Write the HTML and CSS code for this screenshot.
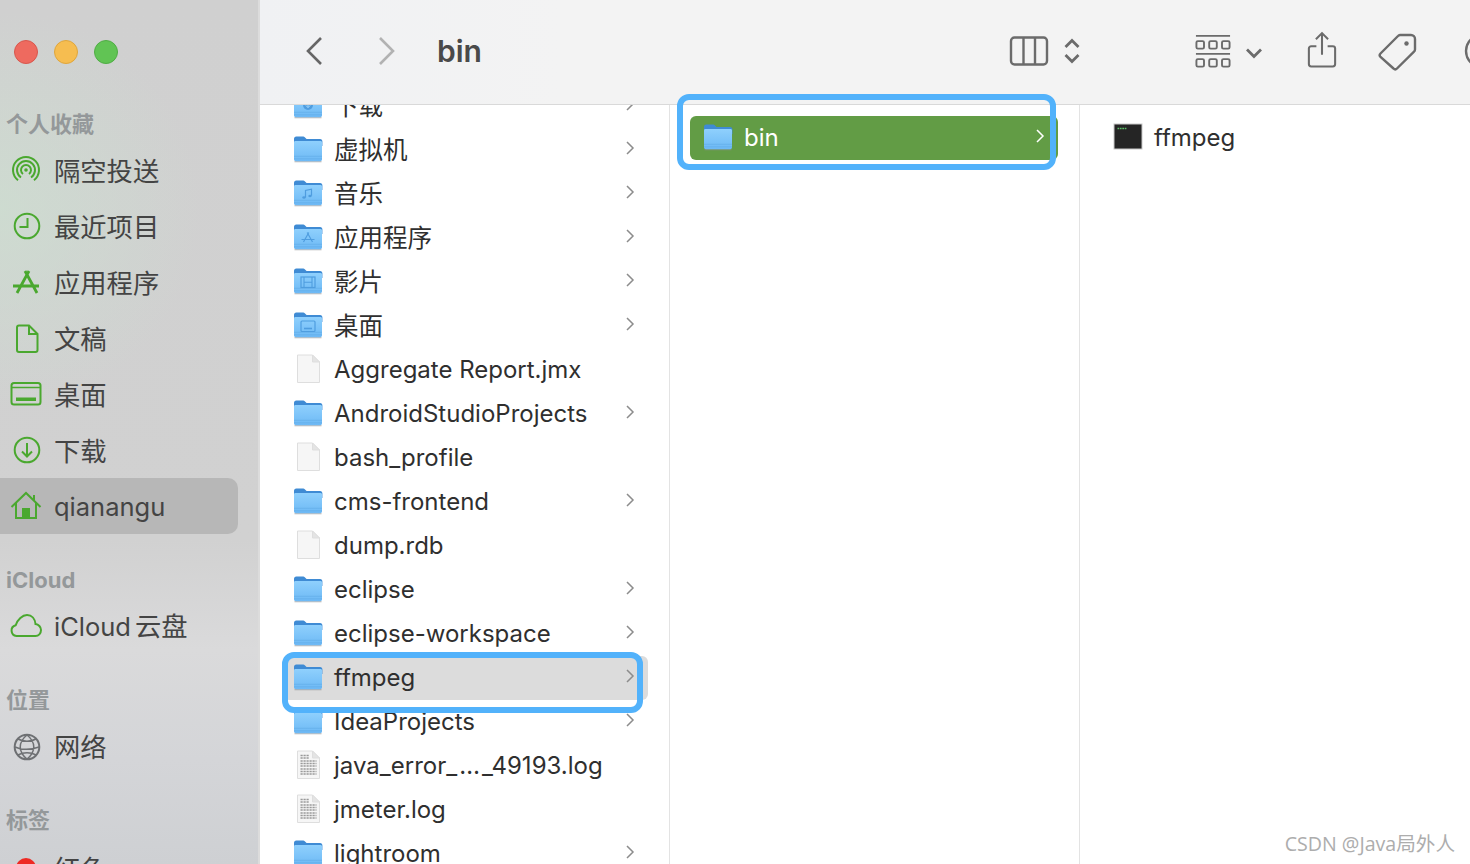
FILE: index.html
```html
<!DOCTYPE html>
<html lang="zh">
<head>
<meta charset="utf-8">
<title>bin</title>
<link rel="stylesheet" href="styles.css">
</head>
<body>
<svg class="defs" width="0" height="0" aria-hidden="true">
  <defs>
    <linearGradient id="fg" x1="0" y1="0" x2="0" y2="1"><stop offset="0" stop-color="#8fd0fd"/><stop offset="1" stop-color="#6db9f5"/></linearGradient>
    <symbol id="folder" viewBox="0 0 30 30">
      <path d="M1.500 27.600h27" stroke="#8f8f8f" stroke-width="1.400" opacity=".55"/>
      <path d="M1 5c0-1.700.8-2.600 2.400-2.600h6.400c1 0 1.500.3 2.200 1l1.600 1.600h13.400c1.600 0 2.400.9 2.400 2.400V12H1z" fill="#3f8bd4"/>
      <path d="M1 8.400c0-.8.6-1.400 1.400-1.400h25.200c.8 0 1.400.6 1.400 1.400v16.800c0 1.200-.8 2-2 2H3c-1.200 0-2-.8-2-2z" fill="url(#fg)"/>
      <path d="M1 22.300h28M1 24.800h28" stroke="#5ea9e6" stroke-width=".8" opacity=".7"/>
    </symbol>
    <symbol id="folder-down" viewBox="0 0 30 30"><use href="#folder"/><circle cx="15" cy="15" r="5" fill="#4f9ddf"/><path d="M15 12v5.500M12.800 15.400l2.200 2.200 2.200-2.200" stroke="#9dd4fb" fill="none"/></symbol>
    <symbol id="folder-music" viewBox="0 0 30 30"><use href="#folder"/><path d="M12.500 19.500v-7l6-1.300v6.500" stroke="#4f9ddf" stroke-width="1.200" fill="none"/><ellipse cx="11" cy="19.500" rx="1.700" ry="1.300" fill="#4f9ddf"/><ellipse cx="17" cy="18" rx="1.700" ry="1.300" fill="#4f9ddf"/></symbol>
    <symbol id="folder-app" viewBox="0 0 30 30"><use href="#folder"/><path d="M15.800 10.500L10.500 20M14.200 10.500L19.500 20M8.500 17.500h13" stroke="#4f9ddf" stroke-width="1.200" fill="none"/></symbol>
    <symbol id="folder-film" viewBox="0 0 30 30"><use href="#folder"/><rect x="8" y="11" width="14" height="10.500" fill="none" stroke="#4f9ddf" stroke-width="1.200"/><path d="M11 11v10.500M19 11v10.500M11 16.200h8" stroke="#4f9ddf" stroke-width="1.100"/></symbol>
    <symbol id="folder-desk" viewBox="0 0 30 30"><use href="#folder"/><rect x="8" y="11" width="14" height="10.500" rx="1" fill="none" stroke="#4f9ddf" stroke-width="1.200"/><path d="M11 18.500h8" stroke="#4f9ddf" stroke-width="1.600"/></symbol>
    <symbol id="doc" viewBox="0 0 30 30">
      <path d="M4.500 1h15l7 7v20.500h-22z" fill="#f6f6f6" stroke="#dedede"/>
      <path d="M19.500 1v7h7z" fill="#e4e4e4" stroke="#dedede"/>
    </symbol>
    <symbol id="log" viewBox="0 0 30 30">
      <use href="#doc"/>
      <path d="M7.500 5.500h9M7.500 8h9M7.500 11h16M7.500 13.500h16M7.500 16h16M7.500 19h16M7.500 21.500h16M7.500 24h16" stroke="#9a9a9a" stroke-width="1.300" stroke-dasharray="2.200 .8"/>
    </symbol>
    <symbol id="chev" viewBox="0 0 10 16"><path d="M2 2l6 6-6 6" fill="none" stroke="currentColor" stroke-width="1.500"/></symbol>
  </defs>
</svg>

<div class="app">
  <aside class="sidebar">
    <div class="lights"><span class="light red"></span><span class="light yellow"></span><span class="light green"></span></div>

    <div class="heading">个人收藏</div>
    <div class="item"><svg class="ic" viewBox="0 0 32 32"><path d="M8 26.200a13 13 0 1 1 16 0M11 23.500a9 9 0 1 1 10 0M13 20a5 5 0 1 1 6 0" fill="none"/><circle cx="16" cy="16" r="1.800" class="solid"/></svg><span class="label">隔空投送</span></div>
    <div class="item"><svg class="ic" viewBox="0 0 32 32"><circle cx="17" cy="16" r="12.300" fill="none"/><path d="M17.500 8v9H9.500" fill="none"/></svg><span class="label">最近项目</span></div>
    <div class="item"><svg class="ic" viewBox="0 0 32 32"><path d="M15 5l12 22M19 5L7 27M3 20h26" fill="none" stroke-width="2.800"/></svg><span class="label">应用程序</span></div>
    <div class="item"><svg class="ic" viewBox="0 0 32 32"><path d="M7 5.500a2 2 0 0 1 2-2h10l8.500 8.500v16a2 2 0 0 1-2 2H9a2 2 0 0 1-2-2zM19 3.500V12h8.500" fill="none"/></svg><span class="label">文稿</span></div>
    <div class="item"><svg class="ic" viewBox="0 0 32 32"><rect x="1.500" y="5" width="29" height="21.500" rx="2.500" fill="none"/><path d="M1.500 9.500h29" fill="none" stroke-width="1.500"/><rect x="6" y="19.500" width="20" height="3.500" class="solid"/></svg><span class="label">桌面</span></div>
    <div class="item"><svg class="ic" viewBox="0 0 32 32"><circle cx="17" cy="16" r="12.300" fill="none"/><path d="M17 9v13M12 17.500l5 5 5-5" fill="none"/></svg><span class="label">下载</span></div>
    <div class="item item-current"><svg class="ic" viewBox="0 0 32 32"><path d="M1.500 17L16 3l14.500 14M6 13v15h20V13M24 5v5" fill="none"/><rect x="12" y="18" width="8" height="10" class="solid"/></svg><span class="label-latin">qianangu</span></div>

    <div class="heading heading-next">iCloud</div>
    <div class="item"><svg class="ic" viewBox="0 0 32 32"><path d="M6.500 26a5.500 5.500 0 0 1-.8-10.800C7.500 9.500 12.500 5 17 5c5 0 8 4 8.500 9 3 .3 5.500 3 5.500 6 0 3.500-2.500 6-5.500 6z" fill="none"/></svg><span class="label label-high"><span class="label-latin">iCloud</span><span class="cjk-gap">云盘</span></span></div>

    <div class="heading heading-next heading-wide">位置</div>
    <div class="item"><svg class="ic ic-grey" viewBox="0 0 32 32"><circle cx="17" cy="16" r="12.300" fill="none"/><path d="M5 16c6 3 16 3 24 0M8 8c5 3 13 3 18 0M17 4c-9 7-9 17 0 24M17 4c9 7 9 17 0 24M8 24c5-3 13-3 18 0" fill="none" stroke-width="1.500"/></svg><span class="label label-high">网络</span></div>

    <div class="heading heading-next heading-wide heading-tags">标签</div>
    <div class="item"><span class="tag-dot"></span><span class="label">红色</span></div>
  </aside>

  <main class="main">
    <header class="toolbar">
      <svg class="tb tb-back" width="20" height="32" viewBox="0 0 20 32"><path d="M17 3L4 16l13 13" fill="none" stroke="#666" stroke-width="2.600"/></svg>
      <svg class="tb tb-fwd" width="20" height="32" viewBox="0 0 20 32"><path d="M3 3l13 13L3 29" fill="none" stroke="#b2b2b2" stroke-width="2.600"/></svg>
      <div class="title">bin</div>
      <svg class="tb tb-cols" width="40" height="32" viewBox="0 0 40 32"><rect x="2" y="2.500" width="36" height="27" rx="3.500" fill="none" stroke="#6b6b6b" stroke-width="2.400"/><path d="M14.500 2.500v27M26 2.500v27" stroke="#6b6b6b" stroke-width="2.400"/></svg>
      <svg class="tb tb-updown" width="18" height="32" viewBox="0 0 18 32"><path d="M2.500 12L9 5.500l6.500 6.500M2.500 20L9 26.500l6.500-6.500" fill="none" stroke="#6b6b6b" stroke-width="2.800"/></svg>
      <svg class="tb tb-group" width="36" height="37" viewBox="0 0 38 38"><path d="M1 2.500h36M1 21.500h36" stroke="#6b6b6b" stroke-width="2"/><g fill="none" stroke="#6b6b6b" stroke-width="2"><rect x="1.500" y="8" width="8" height="8" rx="1.500"/><rect x="15" y="8" width="8" height="8" rx="1.500"/><rect x="28.500" y="8" width="8" height="8" rx="1.500"/><rect x="1.500" y="27" width="8" height="8" rx="1.500"/><rect x="15" y="27" width="8" height="8" rx="1.500"/><rect x="28.500" y="27" width="8" height="8" rx="1.500"/></g></svg>
      <svg class="tb tb-down" width="18" height="12" viewBox="0 0 18 12"><path d="M2 2.500l7 7 7-7" fill="none" stroke="#6b6b6b" stroke-width="2.800"/></svg>
      <svg class="tb tb-share" width="30" height="38" viewBox="0 0 32 40"><path d="M10 16H4.500a2.500 2.500 0 0 0-2.500 2.500V35a2.500 2.500 0 0 0 2.500 2.500h23A2.500 2.500 0 0 0 30 35V18.500a2.500 2.500 0 0 0-2.500-2.500H22M16 25V2M9.500 8.500L16 2l6.500 6.500" fill="none" stroke="#6b6b6b" stroke-width="2.200"/></svg>
      <svg class="tb tb-tag" width="40" height="38" viewBox="0 0 40 38"><path d="M2.500 20.500L20 3a3 3 0 0 1 2-1h11a4 4 0 0 1 4 4v10.500a3 3 0 0 1-1 2.200L19 35.500a2.500 2.500 0 0 1-3.500 0l-13-11.500a2.500 2.500 0 0 1 0-3.500z" fill="none" stroke="#6b6b6b" stroke-width="2.400"/><circle cx="28.500" cy="10.500" r="2.200" fill="#6b6b6b"/></svg>
      <svg class="tb tb-more" width="36" height="36" viewBox="0 0 36 36"><circle cx="18" cy="18" r="16" fill="none" stroke="#6b6b6b" stroke-width="2.400"/></svg>
    </header>

    <div class="columns">
      <section class="column column-first">
        <div class="row"><svg class="file"><use href="#folder-down"/></svg><span class="name name-cjk">下载</span><svg class="chev"><use href="#chev"/></svg></div>
        <div class="row"><svg class="file"><use href="#folder"/></svg><span class="name name-cjk">虚拟机</span><svg class="chev"><use href="#chev"/></svg></div>
        <div class="row"><svg class="file"><use href="#folder-music"/></svg><span class="name name-cjk">音乐</span><svg class="chev"><use href="#chev"/></svg></div>
        <div class="row"><svg class="file"><use href="#folder-app"/></svg><span class="name name-cjk">应用程序</span><svg class="chev"><use href="#chev"/></svg></div>
        <div class="row"><svg class="file"><use href="#folder-film"/></svg><span class="name name-cjk">影片</span><svg class="chev"><use href="#chev"/></svg></div>
        <div class="row"><svg class="file"><use href="#folder-desk"/></svg><span class="name name-cjk">桌面</span><svg class="chev"><use href="#chev"/></svg></div>
        <div class="row"><svg class="file"><use href="#doc"/></svg><span class="name">Aggregate Report.jmx</span></div>
        <div class="row"><svg class="file"><use href="#folder"/></svg><span class="name">AndroidStudioProjects</span><svg class="chev"><use href="#chev"/></svg></div>
        <div class="row"><svg class="file"><use href="#doc"/></svg><span class="name">bash_profile</span></div>
        <div class="row"><svg class="file"><use href="#folder"/></svg><span class="name">cms-frontend</span><svg class="chev"><use href="#chev"/></svg></div>
        <div class="row"><svg class="file"><use href="#doc"/></svg><span class="name">dump.rdb</span></div>
        <div class="row"><svg class="file"><use href="#folder"/></svg><span class="name">eclipse</span><svg class="chev"><use href="#chev"/></svg></div>
        <div class="row"><svg class="file"><use href="#folder"/></svg><span class="name">eclipse-workspace</span><svg class="chev"><use href="#chev"/></svg></div>
        <div class="row row-inactive"><svg class="file"><use href="#folder"/></svg><span class="name">ffmpeg</span><svg class="chev"><use href="#chev"/></svg></div>
        <div class="row"><svg class="file"><use href="#folder"/></svg><span class="name">IdeaProjects</span><svg class="chev"><use href="#chev"/></svg></div>
        <div class="row"><svg class="file"><use href="#log"/></svg><span class="name">java_error_<span class="ellipsis">…</span>_49193.log</span></div>
        <div class="row"><svg class="file"><use href="#log"/></svg><span class="name">jmeter.log</span></div>
        <div class="row"><svg class="file"><use href="#folder"/></svg><span class="name">lightroom</span><svg class="chev"><use href="#chev"/></svg></div>
      </section>
      <section class="column column-second">
        <div class="row row-active"><svg class="file"><use href="#folder"/></svg><span class="name">bin</span><svg class="chev"><use href="#chev"/></svg></div>
      </section>
      <section class="column column-third">
        <div class="row row-plain">
          <svg class="file" viewBox="0 0 30 30"><rect x="1" y="2" width="28" height="25" fill="#252525" stroke="#c9c9c9"/><path d="M4.500 6.500h9" stroke="#5fbf6a" stroke-width="1.600" stroke-dasharray="1.700 .7"/></svg>
          <span class="name">ffmpeg</span>
        </div>
      </section>
    </div>
  </main>

  <div class="mark mark-ffmpeg"></div>
  <div class="mark mark-bin"></div>
  <div class="watermark">CSDN @Java局外人</div>
</div>
</body>
</html>
```

FILE: styles.css
```css
* { box-sizing: border-box; }
html, body { margin: 0; height: 100%; overflow: hidden; }
body {
  background: #fff;
  font-family: "Inter", "Noto Sans CJK SC", sans-serif;
  color: #2f2f2f;
}
.defs { position: absolute; }
.app { position: relative; display: flex; width: 1470px; height: 864px; overflow: hidden; }

/* Sidebar */
.sidebar {
  flex: 0 0 260px;
  height: 864px;
  overflow: hidden;
  border-right: 2px solid #dcdcdc;
  background:
    radial-gradient(circle at 0 210px, rgba(205, 222, 208, .8), rgba(208, 208, 208, 0) 200px),
    linear-gradient(180deg, #d0d0d0 0, #d1d1d1 540px, #dadadb 650px, #d4d5d8 760px, #ced0d3 864px);
  color: #444;
}
.lights { display: flex; gap: 16px; height: 104px; padding: 40px 0 0 14px; }
.light { width: 24px; height: 24px; border-radius: 50%; border: 1px solid; }
.red { background: #ee6a5f; border-color: #d8574d; }
.yellow { background: #f6bd50; border-color: #dfa63c; }
.green { background: #61c454; border-color: #50ad45; }

.heading {
  height: 38px;
  padding-left: 6px;
  font-size: 22px;
  font-weight: 700;
  line-height: 40px;
  color: #94989a;
}
.heading-next { height: 39px; margin-top: 25px; line-height: 42px; }
.heading-wide { margin-top: 26px; line-height: 40px; }
.heading-tags { line-height: 38px; }
.item {
  display: flex;
  align-items: center;
  gap: 12px;
  width: 238px;
  height: 56px;
  padding-left: 10px;
  font-size: 26.300px;
  white-space: nowrap;
}
.item-current { background: #b7b7b7; border-radius: 0 10px 10px 0; }
.label { margin-bottom: 2px; }
.label-high { margin-bottom: 4px; }
.label-latin { font-size: 25.500px; }
.ic { flex: 0 0 32px; width: 32px; height: 32px; stroke: #4aa82f; stroke-width: 2; color: #4aa82f; }
.ic .solid { fill: #4aa82f; stroke: none; }
.ic-grey { stroke: #6e7073; }
.cjk-gap { margin-left: 4px; }
.tag-dot { flex: 0 0 20px; width: 20px; height: 20px; margin: 0 6px; border-radius: 50%; background: #ee2a24; }

/* Main */
.main { flex: 1; min-width: 0; display: flex; flex-direction: column; height: 864px; }
.toolbar {
  position: relative;
  z-index: 2;
  flex: 0 0 105px;
  display: flex;
  align-items: center;
  overflow: hidden;
  padding-bottom: 2px;
  background: linear-gradient(90deg, #f0f1f3, #f3f3f3 300px);
  border-bottom: 1px solid #d9d9d9;
}
.tb { flex: 0 0 auto; }
.tb-back { margin-left: 44px; }
.tb-fwd { margin-left: 53px; }
.title { margin-left: 40px; font-size: 30px; font-weight: 600; color: #4a4a4a; }
.tb-cols { margin-left: auto; }
.tb-updown { margin-left: 14px; }
.tb-group { margin-left: 114px; }
.tb-down { margin-left: 14px; margin-top: 4px; }
.tb-share { margin-left: 44px; margin-bottom: 3px; }
.tb-tag { margin-left: 41px; margin-top: 2px; }
.tb-more { margin-left: 46px; margin-right: -30px; }

.columns { flex: 1; min-height: 0; display: flex; }
.column { flex: 0 0 410px; overflow: hidden; border-right: 1px solid #e3e3e3; }
.column-first .row:first-child { margin-top: -21px; }
.column-second, .column-third { padding-top: 11px; }
.column-third { flex: 1; border-right: 0; }

.row {
  display: flex;
  align-items: center;
  height: 44px;
  margin: 0 21px 0 23px;
  padding: 0 13px 0 10px;
  border-radius: 6px;
  font-size: 24px;
  white-space: nowrap;
}
.column-second .row { margin-left: 20px; padding-left: 13px; }
.row-plain { margin-left: 23px; }
.file { flex: 0 0 30px; width: 30px; height: 30px; margin-right: 11px; margin-bottom: 2px; }
.name { flex: 1; margin-bottom: 2px; color: #2f2f2f; }
.name-cjk { font-size: 24.500px; margin-bottom: 4px; }
.ellipsis { margin: 0 2px; }
.chev { flex: 0 0 10px; width: 10px; height: 16px; margin-bottom: 4px; color: #8c8c8c; }
.row-inactive { background: #dcdcdc; }
.row-active { background: #629c45; }
.row-active .name { color: #fff; }
.row-active .chev { color: #fff; }

/* Annotations drawn over the window */
.mark { position: absolute; z-index: 3; border: 6px solid #52b2fb; border-radius: 12px; pointer-events: none; }
.mark-ffmpeg { left: 282px; top: 652px; width: 361px; height: 61px; }
.mark-bin { left: 677px; top: 94px; width: 379px; height: 76px; }
.watermark {
  position: absolute;
  z-index: 3;
  right: 15px;
  bottom: 7px;
  font-family: "Open Sans", "Noto Sans CJK SC", sans-serif;
  font-size: 19.600px;
  color: #adadad;
}
```
